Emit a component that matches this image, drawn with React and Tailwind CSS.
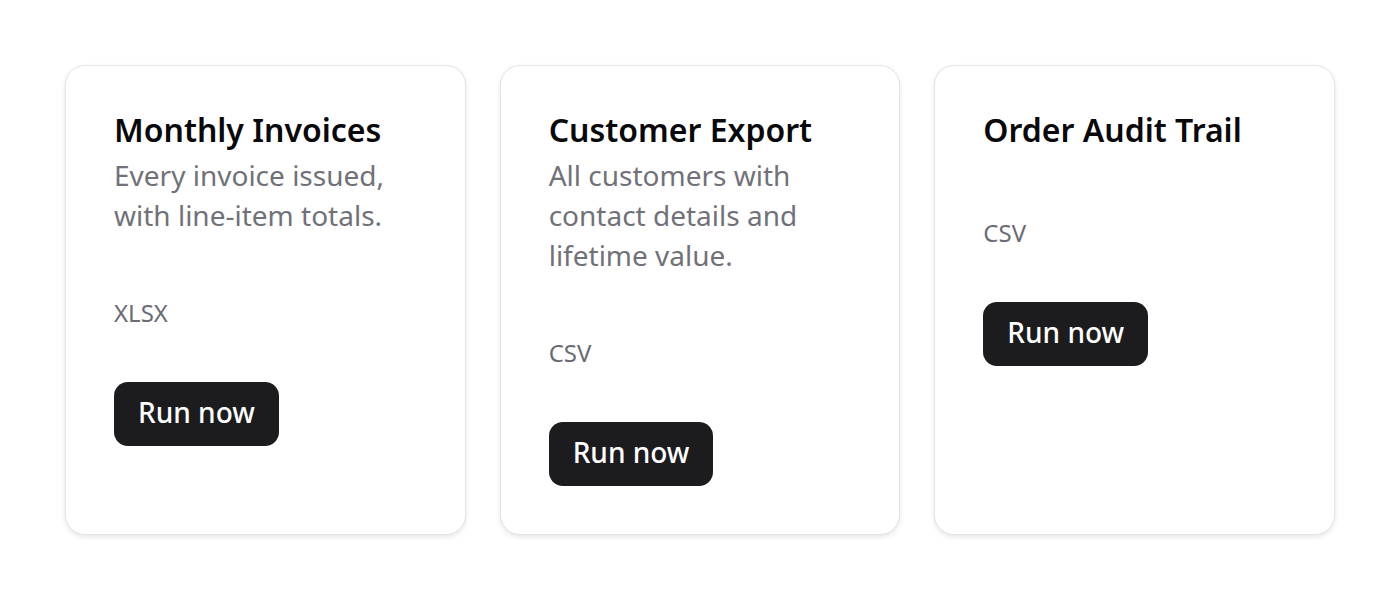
import React from "react";

const reports = [
  {
    title: "Monthly Invoices",
    desc: "Every invoice issued, with line-item totals.",
    format: "XLSX",
  },
  {
    title: "Customer Export",
    desc: "All customers with contact details and lifetime value.",
    format: "CSV",
  },
  {
    title: "Order Audit Trail",
    desc: "",
    format: "CSV",
  },
];

const ReportCard = ({ title, desc, format }) => (
  <div className="rounded-[20px] border border-[#e4e4e7] bg-white p-12 shadow-[0_2px_5px_rgba(0,0,0,0.1)] flex flex-col items-start">
    <h2 className="text-[32px] leading-[32px] font-semibold text-[#09090b]">
      {title}
    </h2>
    <p className="mt-[9px] text-[28px] leading-[40px] text-[#71717a]">
      {desc}
    </p>
    <div className="mt-[60px] text-[24px] leading-[36px] text-[#6b6b75]">
      {format}
    </div>
    <button className="mt-[51px] h-16 rounded-[14px] bg-[#1c1c1e] px-6 pb-1 text-[28px] font-medium leading-[40px] text-white">
      Run now
    </button>
  </div>
);

export default function App() {
  return (
    <div
      className="min-h-[600px] bg-white px-[65px] pt-[65px]"
      style={{ fontFamily: '"Noto Sans", sans-serif' }}
    >
      <div className="grid grid-cols-3 gap-[34px]">
        {reports.map((r) => (
          <ReportCard key={r.title} {...r} />
        ))}
      </div>
    </div>
  );
}
